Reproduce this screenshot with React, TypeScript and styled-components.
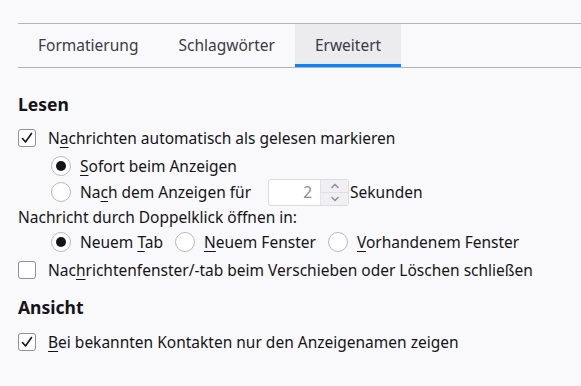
import React from 'react';
import styled, { createGlobalStyle } from 'styled-components';

const GlobalStyle = createGlobalStyle`
  html, body {
    margin: 0;
    background: #f9f9fb;
  }
  body {
    font-family: "Noto Sans", "DejaVu Sans", sans-serif;
    font-size: 15.5px;
    color: #15141a;
  }
`;

const Page = styled.div`
  width: 581px;
  height: 386px;
  padding: 23px 0 0 18px;
  box-sizing: border-box;
  overflow: hidden;
`;

const TabBar = styled.div`
  border-top: 1px solid #b4b4b8;
  border-bottom: 1px solid #b4b4b8;
  display: flex;
`;

const Tab = styled.div<{ $selected?: boolean }>`
  align-items: center;
  background: ${({ $selected }) => ($selected ? '#ececef' : 'transparent')};
  border-bottom: 3px solid ${({ $selected }) => ($selected ? '#0a84ff' : 'transparent')};
  box-sizing: border-box;
  color: #3b3b45;
  display: flex;
  height: 43px;
  padding: 1px 20px 0;
`;

const Section = styled.section<{ $gap: number }>`
  display: flex;
  flex-direction: column;
  margin-top: ${({ $gap }) => $gap}px;
`;

const Heading = styled.h2<{ $after: number }>`
  font-size: 17.5px;
  font-weight: 700;
  height: 24px;
  line-height: 24px;
  margin: 0 0 ${({ $after }) => $after}px;
`;

const Row = styled.div<{ $indent?: number; $height: number }>`
  align-items: center;
  display: flex;
  height: ${({ $height }) => $height}px;
  padding-left: ${({ $indent = 0 }) => $indent}px;
  white-space: pre;
`;

const Label = styled.span`
  white-space: pre;
`;

const PlainText = styled.div`
  height: 26px;
  line-height: 26px;
`;

const CheckBox = styled.span`
  align-items: center;
  background: #fff;
  border: 1px solid #8f8f9d;
  border-radius: 3px;
  box-sizing: border-box;
  display: flex;
  flex-shrink: 0;
  height: 18px;
  justify-content: center;
  margin-right: 12px;
  width: 18px;
`;

const Radio = styled.span<{ $checked?: boolean }>`
  align-items: center;
  background: #fff;
  border: 1px solid #b8b8c0;
  border-radius: 50%;
  box-sizing: border-box;
  display: flex;
  flex-shrink: 0;
  height: 20px;
  justify-content: center;
  margin-right: 9px;
  width: 20px;
  &::after {
    background: #15141a;
    border-radius: 50%;
    content: '';
    display: ${({ $checked }) => ($checked ? 'block' : 'none')};
    height: 10px;
    width: 10px;
  }
`;

const Key = styled.span`
  text-decoration: underline;
  text-underline-offset: 3px;
`;

const Choice = styled.span`
  align-items: center;
  display: flex;
  margin-right: 12px;
`;

const Spinner = styled.span`
  background: #fff;
  border: 1px solid #dcdce0;
  border-radius: 3px;
  box-sizing: border-box;
  display: flex;
  flex-shrink: 0;
  height: 27px;
  margin: 0 1px 0 17px;
  width: 81px;
`;

const SpinValue = styled.span`
  align-items: center;
  color: #8a8a94;
  display: flex;
  flex: 1;
  justify-content: flex-end;
  padding-right: 8px;
`;

const SpinButtons = styled.span`
  border-left: 1px solid #e3e3e6;
  display: flex;
  flex-direction: column;
  width: 27px;
`;

const SpinButton = styled.span<{ $top?: boolean }>`
  align-items: center;
  background: #f0f0f2;
  border-bottom: ${({ $top }) => ($top ? '1px solid #e0e0e4' : 'none')};
  display: flex;
  flex: 1;
  justify-content: center;
`;

const Check = () => (
  <svg width="14" height="14" viewBox="0 0 14 14">
    <path d="M2.5 7.5 L5.5 11 L11.5 2.5" fill="none" stroke="#15141a" strokeWidth="1.6" strokeLinecap="round" strokeLinejoin="round" />
  </svg>
);

const Chevron = ({ up }: { up?: boolean }) => (
  <svg width="10" height="6" viewBox="0 0 10 6">
    <path d={up ? 'M1.5 5 L5 1.5 L8.5 5' : 'M1.5 1 L5 4.5 L8.5 1'} fill="none" stroke="#8a8a94" strokeWidth="1.3" />
  </svg>
);

const App: React.FC = () => {
  return (
    <>
      <GlobalStyle />
      <Page>
        <TabBar>
          <Tab>Formatierung</Tab>
          <Tab>Schlagwörter</Tab>
          <Tab $selected>Erweitert</Tab>
        </TabBar>

        <Section $gap={24}>
          <Heading $after={8}>Lesen</Heading>
          <Row $height={28}>
            <CheckBox><Check /></CheckBox>
            <Label>N<Key>a</Key>chrichten automatisch als gelesen markieren</Label>
          </Row>
          <Row $indent={33} $height={28}>
            <Radio $checked />
            <Label><Key>S</Key>ofort beim Anzeigen</Label>
          </Row>
          <Row $indent={33} $height={24}>
            <Radio />
            <Label>Na<Key>c</Key>h dem Anzeigen für</Label>
            <Spinner>
              <SpinValue>2</SpinValue>
              <SpinButtons>
                <SpinButton $top><Chevron up /></SpinButton>
                <SpinButton><Chevron /></SpinButton>
              </SpinButtons>
            </Spinner>
            <Label>Sekunden</Label>
          </Row>
          <PlainText>Nachricht durch Doppelklick öffnen in:</PlainText>
          <Row $indent={33} $height={24}>
            <Choice>
              <Radio $checked />
              <Label>Neuem <Key>T</Key>ab</Label>
            </Choice>
            <Choice>
              <Radio />
              <Label><Key>N</Key>euem Fenster</Label>
            </Choice>
            <Choice>
              <Radio />
              <Label><Key>V</Key>orhandenem Fenster</Label>
            </Choice>
          </Row>
          <Row $height={32}>
            <CheckBox />
            <Label>Nac<Key>h</Key>richtenfenster/-tab beim Verschieben oder Löschen schließen</Label>
          </Row>
        </Section>

        <Section $gap={9}>
          <Heading $after={9}>Ansicht</Heading>
          <Row $height={28}>
            <CheckBox><Check /></CheckBox>
            <Label><Key>B</Key>ei bekannten Kontakten nur den Anzeigenamen zeigen</Label>
          </Row>
        </Section>
      </Page>
    </>
  );
};

export default App;
